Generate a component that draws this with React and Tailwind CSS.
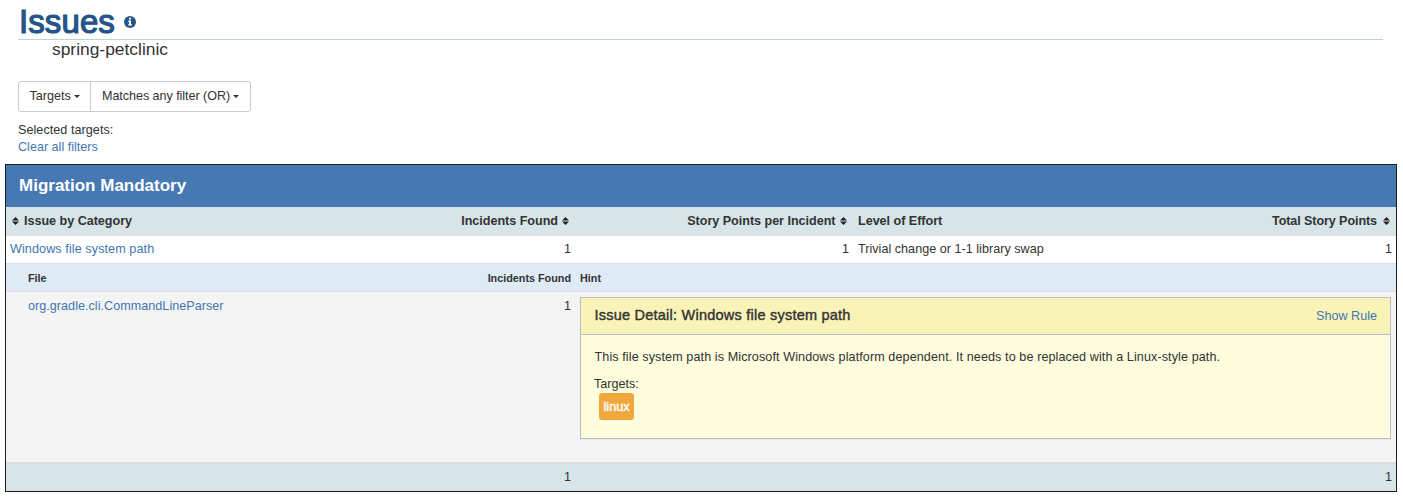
import React from "react";

function SortIcon({ className = "" }) {
  return (
    <svg className={"inline-block h-[8px] w-[7px] shrink-0 " + className} viewBox="0 0 7 8" fill="#222">
      <path d="M3.5 0 7 3.5H0zM0 4.5h7L3.5 8z" />
    </svg>
  );
}

function Caret({ className = "" }) {
  return (
    <svg className={"mt-[1px] h-[3px] w-[6px] shrink-0 " + className} viewBox="0 0 6 3" fill="#333">
      <path d="M0 0h6L3 3z" />
    </svg>
  );
}

function InfoIcon() {
  return (
    <svg className="mt-[1px] ml-[9px] h-[12px] w-[12px]" viewBox="0 0 12 12">
      <circle cx="6" cy="6" r="6" fill="#245488" />
      <path fill="#fff" d="M5 1.8h2v1.7H5zM4.2 4.5H7v3.8h.9v1.3H4.2V8.300h.9V5.800h-.9z" />
    </svg>
  );
}

const columns = "grid grid-cols-[569px_278px_1fr_260px]";
const nestedColumns = "grid grid-cols-[569px_1fr]";

export default function App() {
  return (
    <div className="h-[500px] w-[1403px] overflow-hidden bg-white font-['Liberation_Sans',Arial,sans-serif] text-[12.6px] leading-[18px] text-[#333]">
      <header className="ml-[18px] w-[1365px]">
        <div className="flex h-[40px] items-center border-b border-[#b5d6d4] pt-[4px]">
          <h1 className="pl-[1px] text-[33px] leading-[36px] tracking-[0.1px] text-[#245488] [-webkit-text-stroke:1.2px_#245488]">Issues</h1>
          <InfoIcon />
        </div>
        <div className="h-[20px] pl-[34px] text-[17.4px] leading-[18px]">spring-petclinic</div>
      </header>

      <div className="mt-[21px] ml-[18px] flex h-[31px] w-[233px] rounded-[3px] border border-[#ccc]">
        <button className="flex w-[72px] items-center border-r border-[#ccc] pb-[2px] pl-[10.500px]"><span>Targets</span><Caret className="ml-[3px]" /></button>
        <button className="flex flex-1 items-center pb-[2px] pl-[11px]"><span className="tracking-[-0.06px]">Matches any filter (OR)</span><Caret className="ml-[3px]" /></button>
      </div>
      <div className="mt-[9px] ml-[18px] h-[43px]">
        <div className="h-[17px] tracking-[0.05px]">Selected targets:</div>
        <a className="text-[#4277b4]">Clear all filters</a>
      </div>

      <section className="ml-[5px] w-[1392px] border border-[#1c1c1c]">
        <h2 className="flex h-[42px] items-center bg-[#4678b2] pb-[1px] pl-[13px] text-[17px] font-bold text-white">Migration Mandatory</h2>

        <div className={columns + " h-[29px] items-center border-b border-[#ddd] bg-[#d7e4e8] font-bold tracking-[-0.03px]"}>
          <div className="flex items-center justify-between pr-[6px] pl-[6px]">
            <div className="flex items-center"><SortIcon className="mr-[5px]" /><span>Issue by Category</span></div>
            <div className="flex items-center"><span>Incidents Found</span><SortIcon className="ml-[4px]" /></div>
          </div>
          <div className="flex items-center justify-end pr-[6px]"><span>Story Points per Incident</span><SortIcon className="ml-[4.500px]" /></div>
          <div className="pl-[5px]">Level of Effort</div>
          <div className="flex items-center justify-end pr-[6px]"><span className="tracking-[-0.1px]">Total Story Points</span><SortIcon className="ml-[6px]" /></div>
        </div>

        <div className={columns + " h-[28px] items-center border-b border-[#ddd] bg-white pb-[2px]"}>
          <div className="flex justify-between pr-[4px] pl-[4px]"><a className="tracking-[0.09px] text-[#4277b4]">Windows file system path</a><span>1</span></div>
          <div className="pr-[4px] text-right">1</div>
          <div className="pl-[5px] tracking-[0.02px]">Trivial change or 1-1 library swap</div>
          <div className="pr-[4px] text-right">1</div>
        </div>

        <div className={nestedColumns + " h-[28px] items-center border-b border-[#ddd] bg-[#deebf6] text-[10.800px] font-bold"}>
          <div className="flex justify-between pr-[4px] pl-[22px]"><span>File</span><span>Incidents Found</span></div>
          <div className="pl-[5px]">Hint</div>
        </div>

        <div className={nestedColumns + " h-[170px] bg-[#f4f4f4] pt-[5px]"}>
          <div className="flex justify-between pr-[4px] pl-[22px]"><a className="tracking-[0.03px] text-[#4277b4]">org.gradle.cli.CommandLineParser</a><span>1</span></div>
          <div className="ml-[5px] h-[142px] w-[811px] border border-[#bdbdbd] bg-[#fdfcdd] shadow-[0_1px_1px_rgba(0,0,0,0.05)]">
            <div className="flex h-[37px] items-center justify-between border-b border-[#bdbdbd] bg-[#faf3b8] px-[13px]">
              <h3 className="pb-[2px] pl-[0.500px] text-[14.500px] tracking-[0.23px] [-webkit-text-stroke:0.4px_#333]">Issue Detail: Windows file system path</h3>
              <a className="text-[#4277b4]">Show Rule</a>
            </div>
            <div className="px-[13px] pt-[13px]">
              <p className="pl-[0.500px] tracking-[0.093px]">This file system path is Microsoft Windows platform dependent. It needs to be replaced with a Linux-style path.</p>
              <p className="mt-[9px]">Targets:</p>
              <span className="ml-[5px] flex h-[27px] w-[35px] items-center justify-center rounded-[3px] bg-[#f1a83a] text-white [-webkit-text-stroke:0.4px_#fff]">linux</span>
            </div>
          </div>
        </div>

        <div className={nestedColumns + " h-[29px] items-center border-t-2 border-[#ddd] bg-[#d7e4e8] pb-[2px] text-right"}>
          <div className="pr-[4px]">1</div>
          <div className="pr-[4px]">1</div>
        </div>
      </section>
    </div>
  );
}
